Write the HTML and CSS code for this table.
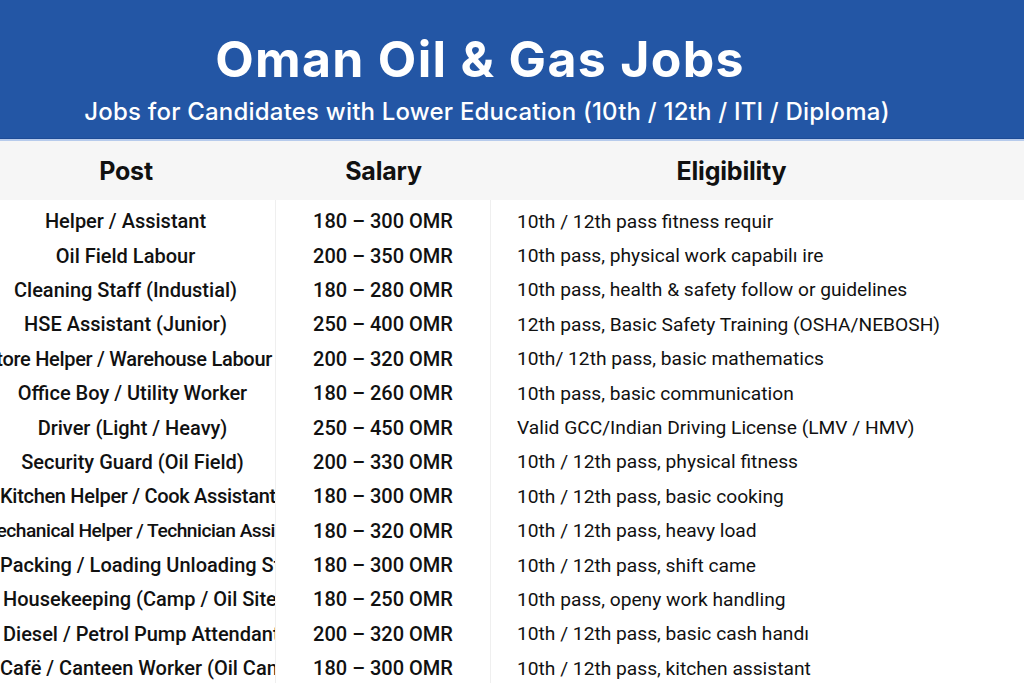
FILE: index.html
```html
<!DOCTYPE html>
<html lang="en">
<head>
<meta charset="utf-8">
<title>Oman Oil &amp; Gas Jobs</title>
<link rel="stylesheet" href="styles.css">
</head>
<body>
<div class="page">
  <header class="banner">
    <h1 class="title">Oman Oil &amp; Gas Jobs</h1>
    <p class="subtitle">Jobs for Candidates with Lower Education (10th / 12th / ITI / Diploma)</p>
  </header>
  <div class="thead">
    <div class="th th-post">Post</div>
    <div class="th th-salary">Salary</div>
    <div class="th th-elig">Eligibility</div>
  </div>
  <div class="tbody">
    <div class="row"><div class="post"><span>Helper / Assistant</span></div><div class="salary">180 – 300 OMR</div><div class="elig">10th / 12th pass fitness requir</div></div>
    <div class="row"><div class="post"><span>Oil Field Labour</span></div><div class="salary">200 – 350 OMR</div><div class="elig">10th pass, physical work capabilı ire</div></div>
    <div class="row"><div class="post"><span>Cleaning Staff (Industial)</span></div><div class="salary">180 – 280 OMR</div><div class="elig">10th pass, health &amp; safety follow or guidelines</div></div>
    <div class="row"><div class="post"><span>HSE Assistant (Junior)</span></div><div class="salary">250 – 400 OMR</div><div class="elig">12th pass, Basic Safety Training (OSHA/NEBOSH)</div></div>
    <div class="row"><div class="post end"><span>Store Helper / Warehouse Labour</span></div><div class="salary">200 – 320 OMR</div><div class="elig">10th/ 12th pass, basic mathematics</div></div>
    <div class="row"><div class="post shifted"><span>Office Boy / Utility Worker</span></div><div class="salary">180 – 260 OMR</div><div class="elig">10th pass, basic communication</div></div>
    <div class="row"><div class="post shifted"><span>Driver (Light / Heavy)</span></div><div class="salary">250 – 450 OMR</div><div class="elig">Valid GCC/Indian Driving License (LMV / HMV)</div></div>
    <div class="row"><div class="post shifted"><span>Security Guard (Oil Field)</span></div><div class="salary">200 – 330 OMR</div><div class="elig">10th / 12th pass, physical fitness</div></div>
    <div class="row"><div class="post start narrow"><span>Kitchen Helper / Cook Assistant</span></div><div class="salary">180 – 300 OMR</div><div class="elig">10th / 12th pass, basic cooking</div></div>
    <div class="row"><div class="post end tight"><span>Mechanical Helper / Technician Assi</span></div><div class="salary">180 – 320 OMR</div><div class="elig">10th / 12th pass, heavy load</div></div>
    <div class="row"><div class="post start"><span>Packing / Loading Unloading Staff</span></div><div class="salary">180 – 300 OMR</div><div class="elig">10th / 12th pass, shift came</div></div>
    <div class="row"><div class="post start inset"><span>Housekeeping (Camp / Oil Site)</span></div><div class="salary">180 – 250 OMR</div><div class="elig">10th pass, openy work handling</div></div>
    <div class="row"><div class="post start inset"><span>Diesel / Petrol Pump Attendant</span></div><div class="salary">200 – 320 OMR</div><div class="elig">10th / 12th pass, basic cash handı</div></div>
    <div class="row"><div class="post start"><span>Cafë / Canteen Worker (Oil Camp)</span></div><div class="salary">180 – 300 OMR</div><div class="elig">10th / 12th pass, kitchen assistant</div></div>
  </div>
</div>
</body>
</html>
```

FILE: styles.css
```css
* { box-sizing: border-box; }
html, body { margin: 0; padding: 0; }
body {
  background: #ffffff;
  font-family: Roboto, "Liberation Sans", sans-serif;
  color: #111111;
}
.page {
  width: 1024px;
  height: 683px;
  overflow: hidden;
}
.banner {
  height: 141px;
  background: #2356a5;
  border-bottom: 2px solid #b7cbec;
  box-shadow: inset 0 -1px 0 #1d4b96;
  display: flex;
  flex-direction: column;
  align-items: center;
  padding: 29px 64px 0 0;
  color: #ffffff;
  font-family: Inter, Roboto, sans-serif;
}
.title {
  margin: 0;
  font-size: 50px;
  font-weight: 700;
  line-height: 60px;
  letter-spacing: 1.3px;
}
.subtitle {
  margin: 8px 0 0 0;
  font-size: 24px;
  font-weight: 500;
  line-height: 30px;
  padding-left: 14px;
  letter-spacing: 0.2px;
}
.thead {
  height: 59px;
  background: #f6f6f6;
  display: grid;
  grid-template-columns: 276px 215px 1fr;
  align-items: center;
  font-family: Inter, Roboto, sans-serif;
}
.th {
  font-size: 25px;
  font-weight: 700;
  text-align: center;
  letter-spacing: -0.2px;
}
.th-post { padding-right: 24px; }
.th-elig { padding-right: 52px; }
.row {
  height: 34.4px;
  display: grid;
  grid-template-columns: 276px 215px 1fr;
  font-size: 20px;
}
.row:first-child { height: 38.4px; }
.row:first-child > div { padding-top: 4px; }
.row > div {
  display: flex;
  align-items: center;
  white-space: nowrap;
  overflow: hidden;
}
.post {
  justify-content: center;
  font-weight: 500;
  border-right: 1px solid #efefef;
  padding-right: 24px;
}
.post.shifted { padding-right: 10px; }
.post.start { justify-content: flex-start; padding-right: 0; }
.post.narrow { letter-spacing: -0.3px; }
.post.end { justify-content: flex-end; padding-right: 3px; letter-spacing: -0.3px; }
.post.tight { letter-spacing: -0.5px; padding-right: 0; font-size: 19.2px; }
.post.inset { padding-left: 3px; }
.post span { flex-shrink: 0; }
.salary {
  justify-content: center;
  font-weight: 500;
  border-right: 1px solid #efefef;
}
.elig {
  padding-left: 26px;
  font-weight: 400;
  font-size: 19.2px;
}
```
